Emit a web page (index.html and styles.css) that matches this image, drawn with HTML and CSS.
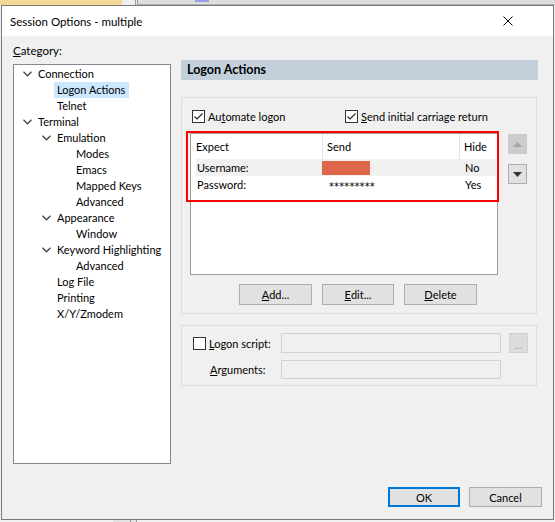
FILE: index.html
```html
<!DOCTYPE html>
<html>
<head>
<meta charset="utf-8">
<link rel="stylesheet" href="styles.css">
</head>
<body>
<div class="desk">
  <div class="d-yellow"></div>
  <div class="d-light"></div>
  <div class="d-line"></div>
  <div class="d-gap"></div>
  <div class="d-line"></div>
  <div class="d-gray"><span class="d-purple"></span></div>
</div>
<div class="dialog">
  <div class="titlebar">
    <span class="title">Session Options - multiple</span>
    <svg class="close" width="10" height="10" viewBox="0 0 10 10"><path d="M0.5 0.5 L9.5 9.5 M9.5 0.5 L0.5 9.5" stroke="#000" stroke-width="1" fill="none"/></svg>
  </div>
  <div class="content">
    <div class="main">
      <div class="left">
        <div class="cat-label"><u>C</u>ategory:</div>
        <div class="tree">
          <div class="ti l0"><span class="chev"><svg width="9" height="6" viewBox="0 0 9 6"><polyline points="0.5,0.8 4.5,4.8 8.5,0.8" fill="none" stroke="#444" stroke-width="1.3"/></svg></span><span class="tx">Connection</span></div>
          <div class="ti l1"><span class="chev"></span><span class="tx sel">Logon Actions</span></div>
          <div class="ti l1"><span class="chev"></span><span class="tx">Telnet</span></div>
          <div class="ti l0"><span class="chev"><svg width="9" height="6" viewBox="0 0 9 6"><polyline points="0.5,0.8 4.5,4.8 8.5,0.8" fill="none" stroke="#444" stroke-width="1.3"/></svg></span><span class="tx">Terminal</span></div>
          <div class="ti l1"><span class="chev"><svg width="9" height="6" viewBox="0 0 9 6"><polyline points="0.5,0.8 4.5,4.8 8.5,0.8" fill="none" stroke="#444" stroke-width="1.3"/></svg></span><span class="tx">Emulation</span></div>
          <div class="ti l2"><span class="chev"></span><span class="tx">Modes</span></div>
          <div class="ti l2"><span class="chev"></span><span class="tx">Emacs</span></div>
          <div class="ti l2"><span class="chev"></span><span class="tx">Mapped Keys</span></div>
          <div class="ti l2"><span class="chev"></span><span class="tx">Advanced</span></div>
          <div class="ti l1"><span class="chev"><svg width="9" height="6" viewBox="0 0 9 6"><polyline points="0.5,0.8 4.5,4.8 8.5,0.8" fill="none" stroke="#444" stroke-width="1.3"/></svg></span><span class="tx">Appearance</span></div>
          <div class="ti l2"><span class="chev"></span><span class="tx">Window</span></div>
          <div class="ti l1"><span class="chev"><svg width="9" height="6" viewBox="0 0 9 6"><polyline points="0.5,0.8 4.5,4.8 8.5,0.8" fill="none" stroke="#444" stroke-width="1.3"/></svg></span><span class="tx">Keyword Highlighting</span></div>
          <div class="ti l2"><span class="chev"></span><span class="tx">Advanced</span></div>
          <div class="ti l1"><span class="chev"></span><span class="tx">Log File</span></div>
          <div class="ti l1"><span class="chev"></span><span class="tx">Printing</span></div>
          <div class="ti l1"><span class="chev"></span><span class="tx">X/Y/Zmodem</span></div>
        </div>
      </div>
      <div class="right">
        <div class="panel-head">Logon Actions</div>
        <div class="group g1">
          <div class="cbrow">
            <div class="cbitem first"><span class="cb"><svg width="11" height="11" viewBox="0 0 11 11"><polyline points="1.5,5.5 4,8 9.5,2.5" fill="none" stroke="#222" stroke-width="1.1"/></svg></span><span>Au<u>t</u>omate logon</span></div>
            <div class="cbitem"><span class="cb"><svg width="11" height="11" viewBox="0 0 11 11"><polyline points="1.5,5.5 4,8 9.5,2.5" fill="none" stroke="#222" stroke-width="1.1"/></svg></span><span><u>S</u>end initial carriage return</span></div>
          </div>
          <div class="listrow">
            <div class="list">
              <div class="lhead">
                <div class="hc c1">Expect</div>
                <div class="hc c2">Send</div>
                <div class="hc c3">Hide</div>
              </div>
              <div class="lrow selrow">
                <div class="rc r1">Username:</div>
                <div class="rc r2"><span class="redact"></span></div>
                <div class="rc r3">No</div>
              </div>
              <div class="lrow">
                <div class="rc r1">Password:</div>
                <div class="rc r2 stars">*********</div>
                <div class="rc r3">Yes</div>
              </div>
            </div>
            <div class="arrows">
              <div class="abtn up"><svg width="9" height="5" viewBox="0 0 9 5"><polygon points="0,5 9,5 4.5,0" fill="#a6a6a6"/></svg></div>
              <div class="abtn down"><svg width="9" height="5" viewBox="0 0 9 5"><polygon points="0,0 9,0 4.5,5" fill="#333"/></svg></div>
            </div>
          </div>
          <div class="btnrow">
            <div class="btn"><u>A</u>dd...</div>
            <div class="btn edit"><u>E</u>dit...</div>
            <div class="btn"><u>D</u>elete</div>
          </div>
          <div class="redbox"></div>
        </div>
        <div class="group g2">
          <div class="frow">
            <div class="lab"><span class="cb"></span><span><u>L</u>ogon script:</span></div>
            <div class="inp"></div>
            <div class="dots">...</div>
          </div>
          <div class="frow second">
            <div class="lab indent"><span><u>A</u>rguments:</span></div>
            <div class="inp"></div>
          </div>
        </div>
      </div>
    </div>
    <div class="footer">
      <div class="btn fbtn ok">OK</div>
      <div class="btn fbtn">Cancel</div>
    </div>
  </div>
</div>
<div class="desk-bot">
  <div class="b-light"></div>
  <div class="b-mid"></div>
  <div class="d-line"></div>
  <div class="b-gap"></div>
  <div class="d-line"></div>
  <div class="b-rest"></div>
</div>
</body>
</html>
```
FILE: styles.css
```css
html, body {
  margin: 0;
  padding: 0;
  background: #f0f0f0;
}
body {
  font-family: Lato, "Noto Sans", sans-serif;
  font-size: 11px;
  color: #000;
  width: 555px;
  height: 522px;
  overflow: hidden;
  white-space: nowrap;
}
u { text-decoration: underline; text-underline-offset: 1px; }

.desk {
  height: 5px;
  display: flex;
}
.d-yellow { width: 122px; background: #f2d995; }
.d-light { width: 13px; background: #efefef; }
.d-line { width: 1px; background: #9a9a9a; }
.d-gap { width: 1px; background: #e8e8e8; }
.d-gray { flex: 1; background: #dedede; border-bottom: 1px solid #b0b0b0; position: relative; }
.d-purple { position: absolute; left: 57px; top: 0; width: 14px; height: 2px; background: #9c9ce8; }

.dialog {
  margin-left: 1px;
  width: 553px;
  height: 515px;
  box-sizing: border-box;
  border: 1px solid #7a7a7a;
  display: flex;
  flex-direction: column;
  background: #f0f0f0;
}
.titlebar {
  height: 30px;
  flex: none;
  background: #fff;
  display: flex;
  align-items: center;
  padding-left: 8px;
}
.title { font-size: 11.5px; }
.close { margin-left: auto; margin-right: 40px; }

.content { flex: 1; display: flex; flex-direction: column; }
.main { display: flex; height: 428px; }
.left { margin-left: 11px; width: 158px; padding-top: 7px; }
.cat-label { height: 15px; line-height: 15px; font-size: 11.5px; }
.tree {
  margin-top: 6px;
  height: 400px;
  box-sizing: border-box;
  border: 1px solid #828790;
  background: #fff;
  padding-top: 1px;
}
.ti { height: 16px; line-height: 16px; display: flex; align-items: center; }
.ti.l0 { padding-left: 8px; }
.ti.l1 { padding-left: 27px; }
.ti.l2 { padding-left: 46px; }
.chev { width: 16px; height: 16px; flex: none; display: flex; align-items: center; }
.chev svg { margin-left: 1px; margin-top: -1px; }
.tx { height: 16px; line-height: 16px; }
.tx.sel { background: #cce8ff; padding: 0 4px 0 3px; margin-left: -3px; }

.right { margin-left: 10px; width: 357px; padding-top: 24px; }
.panel-head {
  height: 20px;
  line-height: 20px;
  background: #c3d0dc;
  padding-left: 6px;
  font-weight: bold;
  font-size: 12.5px;
}
.group {
  width: 356px;
  box-sizing: border-box;
  border: 1px solid #dcdcdc;
  position: relative;
}
.g1 { margin-top: 17px; height: 217px; }
.cbrow { margin-top: 11px; height: 15px; display: flex; align-items: center; padding-left: 10px; }
.cbitem { display: flex; align-items: center; gap: 3px; }
.cbitem.first { width: 153px; }
.cb {
  width: 13px; height: 13px; box-sizing: border-box;
  border: 1px solid #333; background: #fff;
  display: flex; align-items: center; justify-content: center; flex: none;
}
.listrow { margin-top: 9px; display: flex; padding-left: 8px; }
.list {
  width: 308px; height: 142px; box-sizing: border-box;
  border: 1px solid #9a9a9a; background: #fff;
}
.lhead { display: grid; grid-template-columns: 131px 137px 1fr; height: 25px; }
.hc { padding-left: 5px; line-height: 25px; }
.hc.c2, .hc.c3 { border-left: 1px solid #e5e5e5; padding-left: 4px; }
.lrow {
  display: grid; grid-template-columns: 126px 137px 1fr;
  height: 17px; line-height: 17px; margin: 0 1px 0 5px;
}
.selrow { background: #f0f0f0; }
.rc.r1 { padding-left: 1px; }
.rc.r2 { display: flex; align-items: center; }
.rc.r3 { padding-left: 6px; }
.stars { padding-left: 7px; padding-top: 2px; box-sizing: border-box; font-family: "DejaVu Sans", sans-serif; font-size: 10px; letter-spacing: 0.1px; }
.redact { width: 48px; height: 14px; background: #dd6748; }
.arrows { margin-left: 10px; display: flex; flex-direction: column; }
.abtn {
  width: 19px; height: 20px; box-sizing: border-box;
  display: flex; align-items: center; justify-content: center;
}
.abtn.up { margin-top: 1px; background: #cccccc; border: 1px solid #cccccc; }
.abtn.down { margin-top: 10px; background: #e1e1e1; border: 1px solid #adadad; }
.btnrow { margin-top: 9px; display: flex; gap: 10px; padding-left: 57px; }
.btn {
  width: 73px; height: 21px; box-sizing: border-box;
  background: #e1e1e1; border: 1px solid #adadad;
  display: flex; align-items: center; justify-content: center;
}
.btn.edit { width: 72px; }
.redbox {
  position: absolute; left: 4px; top: 33px; width: 313px; height: 71px;
  box-sizing: border-box; border: 2px solid #f00;
}

.g2 { margin-top: 11px; height: 61px; padding-top: 7px; }
.frow { display: flex; align-items: center; height: 20px; padding-left: 11px; }
.frow.second { margin-top: 7px; height: 19px; }
.lab { width: 88px; display: flex; align-items: center; gap: 3px; flex: none; }
.lab.indent { padding-left: 17px; box-sizing: border-box; }
.inp {
  width: 220px; height: 100%; box-sizing: border-box;
  background: #f0f0f0; border: 1px solid #d2d2d2;
}
.dots {
  margin-left: 8px; width: 19px; height: 20px; box-sizing: border-box;
  background: #dcdcdc; border: 1px solid #d0d0d0; color: #a0a0a0;
  display: flex; align-items: center; justify-content: center;
  font-size: 10px; padding-top: 3px;
}

.footer {
  margin-top: 23px; display: flex; justify-content: flex-end;
  gap: 9px; padding-right: 11px;
}
.fbtn { height: 20px; }
.fbtn.ok { width: 72px; border: 2px solid #0078d7; }

.desk-bot { height: 2px; display: flex; }
.b-light { width: 113px; background: #f0f0f0; }
.b-mid { width: 17px; background: #e2e2e2; }
.b-gap { width: 5px; background: #e2e2e2; }
.b-rest { flex: 1; background: #f0f0f0; }
```
